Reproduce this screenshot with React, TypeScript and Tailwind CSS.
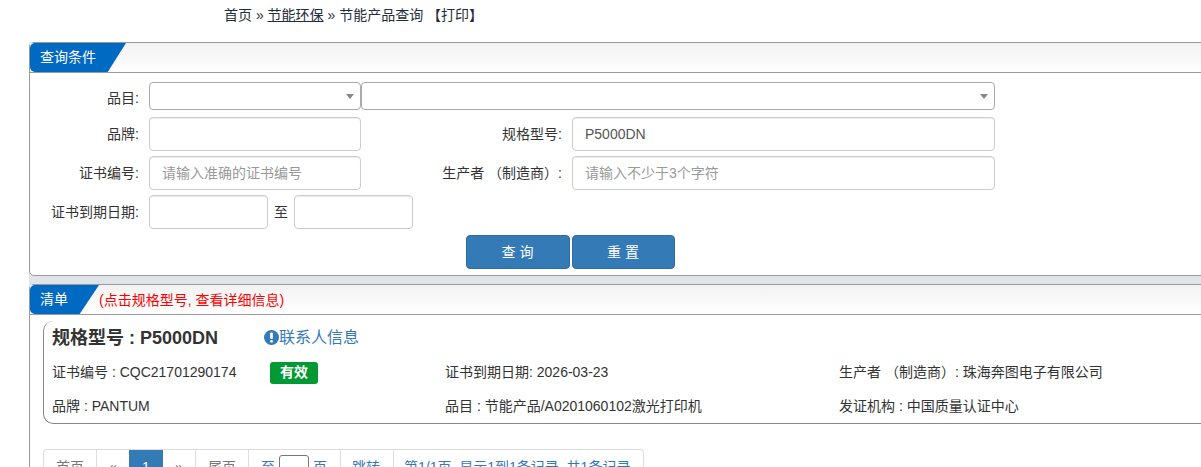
const font = "font-['Liberation_Sans','Noto_Sans_CJK_SC',sans-serif]";

const inputCls = "h-[34px] rounded-[4px] border border-[#ccc] px-3 text-[14px] text-[#555] shadow-[inset_0_1px_1px_rgba(0,0,0,0.075)] outline-none placeholder:text-[#999]";
const labelCls = "text-right text-[14px] text-[#333]";
const pageCell = "flex h-[34px] items-center border-l border-[#ddd] px-3 text-[14px]";
const btnCls = "h-[34px] rounded-[4px] border border-[#2e6da4] bg-[#337ab7] pl-[3px] text-[14px] tracking-[4px] text-white";

const Arrow = () => (
  <span className="h-0 w-0 border-x-[4px] border-t-[5px] border-x-transparent border-t-[#888]" />
);

const PanelHead = ({ title, tabCls, children }: { title: string; tabCls: string; children?: React.ReactNode }) => (
  <div className="flex h-[30px] items-stretch border-b border-[#999] bg-gradient-to-b from-[#f2f2f2] to-white">
    <div className={`${tabCls} flex items-center rounded-l-[5px] bg-[#0069c2] pl-[10px] text-[14px] text-white`}>{title}</div>
    {children}
  </div>
);

export default function App() {
  return (
    <div className={`${font} h-[467px] w-[1201px] overflow-hidden bg-white`}>
      {/* breadcrumb */}
      <div className="h-[42px] pl-[224px] pt-[6px] text-[14px] leading-[18px] text-[#1f2d3d]">
        首页 » <a className="underline">节能环保</a> » 节能产品查询 【打印】
      </div>

      <div className="ml-[29px] w-[1260px] bg-[#e0e4e8]">
        {/* search panel */}
        <div className="h-[234px] rounded-[5px] border border-[#999] bg-white">
          <PanelHead title="查询条件" tabCls="w-[96px] [clip-path:polygon(0_0,100%_0,81%_100%,0_100%)]" />
          <div className="flex flex-col pt-[9px]">
            <div className="flex h-[28px] items-center">
              <span className={`${labelCls} w-[109px] pt-[4px]`}>品目:</span>
              <div className="ml-[10px] flex h-[28px] w-[212px] items-center justify-end rounded-[4px] border border-[#aaa] pr-[6px]">
                <Arrow />
              </div>
              <div className="flex h-[28px] w-[634px] items-center justify-end rounded-[4px] border border-[#aaa] pr-[6px]">
                <Arrow />
              </div>
            </div>
            <div className="mt-[7px] flex items-center">
              <span className={`${labelCls} w-[109px]`}>品牌:</span>
              <input className={`${inputCls} ml-[10px] w-[212px]`} />
              <span className={`${labelCls} w-[201px]`}>规格型号:</span>
              <input className={`${inputCls} ml-[10px] w-[423px]`} defaultValue="P5000DN" />
            </div>
            <div className="mt-[5px] flex items-center">
              <span className={`${labelCls} w-[109px]`}>证书编号:</span>
              <input className={`${inputCls} ml-[10px] w-[212px]`} placeholder="请输入准确的证书编号" />
              <span className={`${labelCls} w-[201px]`}>生产者 （制造商）:</span>
              <input className={`${inputCls} ml-[10px] w-[423px]`} placeholder="请输入不少于3个字符" />
            </div>
            <div className="mt-[5px] flex items-center">
              <span className={`${labelCls} w-[109px]`}>证书到期日期:</span>
              <input className={`${inputCls} ml-[10px] w-[119px]`} />
              <span className="w-[26px] text-center text-[14px] text-[#333]">至</span>
              <input className={`${inputCls} w-[119px]`} />
            </div>
            <div className="mt-[6px] flex gap-[2px] pl-[436px]">
              <button className={`${btnCls} w-[104px]`}>查询</button>
              <button className={`${btnCls} w-[103px]`}>重置</button>
            </div>
          </div>
        </div>

        <div className="h-[8px]" />

        {/* result panel */}
        <div className="h-[300px] rounded-t-[5px] border border-[#999] bg-white">
          <PanelHead title="清单" tabCls="w-[69px] [clip-path:polygon(0_0,100%_0,72%_100%,0_100%)]">
            <span className="self-center pt-[2px] text-[14px] text-[#f00]">(点击规格型号, 查看详细信息)</span>
          </PanelHead>

          <div className="ml-[13px] mt-[6px] h-[103px] rounded-l-[10px] border-b border-l border-[#888] pl-[8px]">
            <div className="flex h-[35px] items-center">
              <span className="w-[212px] text-[18px] font-bold text-[#333]">规格型号 : P5000DN</span>
              <span className="flex items-center pb-[2px] text-[16px] text-[#337ab7]">
                <svg viewBox="0 0 14 14" className="h-[15px] w-[15px]">
                  <circle cx="7" cy="7" r="7" fill="#337ab7" />
                  <rect x="5.7" y="2.4" width="2.6" height="6" rx="1" fill="#fff" />
                  <rect x="5.8" y="9.4" width="2.4" height="2.3" rx="0.6" fill="#fff" />
                </svg>
                联系人信息
              </span>
            </div>
            <div className="flex h-[33px] items-center text-[14px] text-[#333]">
              <div className="flex w-[393px] items-center">
                <span className="w-[218px]">证书编号 : CQC21701290174</span>
                <span className="flex h-[22px] w-[48px] items-center justify-center rounded-[3px] bg-[#009933] text-[14px] font-bold text-white">有效</span>
              </div>
              <div className="w-[394px]">证书到期日期: 2026-03-23</div>
              <div>生产者 （制造商）: 珠海奔图电子有限公司</div>
            </div>
            <div className="flex h-[34px] items-center text-[14px] text-[#333]">
              <div className="w-[393px]">品牌 : PANTUM</div>
              <div className="w-[394px]">品目 : 节能产品/A0201060102激光打印机</div>
              <div>发证机构 : 中国质量认证中心</div>
            </div>
          </div>

          {/* pager */}
          <div className="ml-[13px] mt-[25px] flex w-fit rounded-t-[4px] border-r border-t border-[#ddd]">
            <span className={`${pageCell} w-[53px] rounded-tl-[4px] text-[#777]`}>首页</span>
            <span className={`${pageCell} w-[33px] text-[#777]`}>«</span>
            <span className="flex h-[34px] w-[34px] items-center justify-center bg-[#337ab7] text-[14px] text-white">1</span>
            <span className={`${pageCell} w-[32px] !border-l-0 text-[#777]`}>»</span>
            <span className={`${pageCell} w-[53px] text-[#777]`}>尾页</span>
            <span className={`${pageCell} w-[92px] text-[#337ab7]`}>
              至
              <span className="mx-[4px] h-[24px] w-[30px] rounded-[3px] border border-[#777]" />
              页
            </span>
            <span className={`${pageCell} w-[53px] pl-[11px] text-[#337ab7]`}>跳转</span>
            <span className={`${pageCell} w-[250px] whitespace-nowrap pl-[10px] text-[#337ab7]`}>第1/1页, 显示1到1条记录, 共1条记录</span>
          </div>
        </div>
      </div>
    </div>
  );
}
